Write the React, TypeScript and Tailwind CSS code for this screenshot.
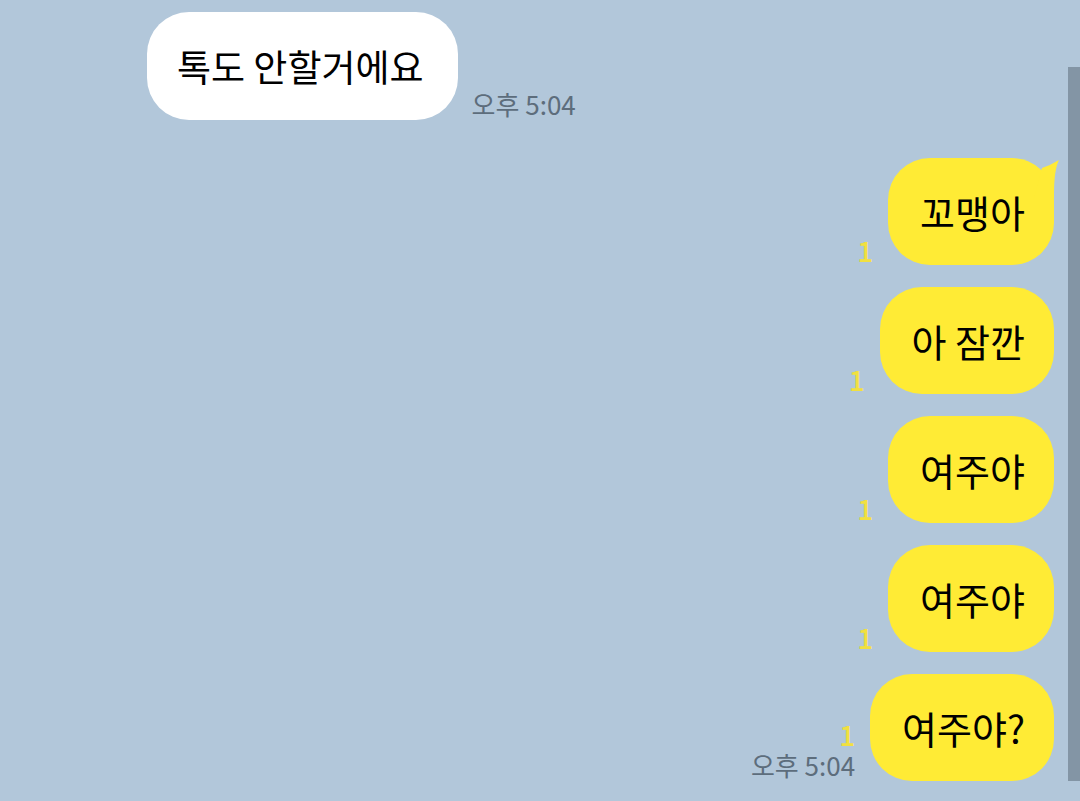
const font = { fontFamily: '"Noto Sans CJK KR", "Noto Sans", sans-serif' };

type Msg = { text: string; tail?: boolean; time?: boolean };

const mine: Msg[] = [
  { text: '꼬맹아', tail: true },
  { text: '아 잠깐' },
  { text: '여주야' },
  { text: '여주야' },
  { text: '여주야?', time: true },
];

function Tail() {
  return (
    <svg className="absolute right-[-8px] top-0" width="32" height="40" viewBox="0 0 32 40">
      <path d="M12 10 Q21 7 29 2 Q24 12 24 36 L24 40 L4 40 Z" fill="#ffeb35" />
    </svg>
  );
}

function MyRow({ msg }: { msg: Msg }) {
  return (
    <div className="flex items-end justify-end gap-[15px]">
      <div className="flex flex-col items-end">
        <span className="text-[28px] font-medium leading-[30px] text-[#f1e040]">1</span>
        {msg.time && <span className="text-[26px] leading-[32px] text-[#5d6d7c]">오후 5:04</span>}
      </div>
      <div className="relative flex h-[107px] items-center rounded-[42px] bg-[#ffeb35] pl-[32px] pr-[29px]">
        {msg.tail && <Tail />}
        <span className="relative text-[38px] leading-none text-black">{msg.text}</span>
      </div>
    </div>
  );
}

export default function App() {
  return (
    <div className="relative h-[801px] w-[1080px] overflow-hidden bg-[#b2c7da]" style={font}>
      <div className="absolute right-0 top-[67px] h-[714px] w-[12px] bg-[#8395a5]" />
      <div className="flex flex-col pt-[12px]">
        <div className="flex items-end gap-[14px] pl-[147px]">
          <div className="flex h-[108px] items-center rounded-[42px] bg-white pl-[30px] pr-[34px]">
            <span className="text-[37px] leading-none text-black">톡도 안할거에요</span>
          </div>
          <span className="text-[26px] leading-[32px] text-[#5d6d7c]">오후 5:04</span>
        </div>
        <div className="mt-[38px] flex flex-col gap-[22px] pr-[26px]">
          {mine.map((m, i) => (
            <MyRow key={i} msg={m} />
          ))}
        </div>
      </div>
    </div>
  );
}
